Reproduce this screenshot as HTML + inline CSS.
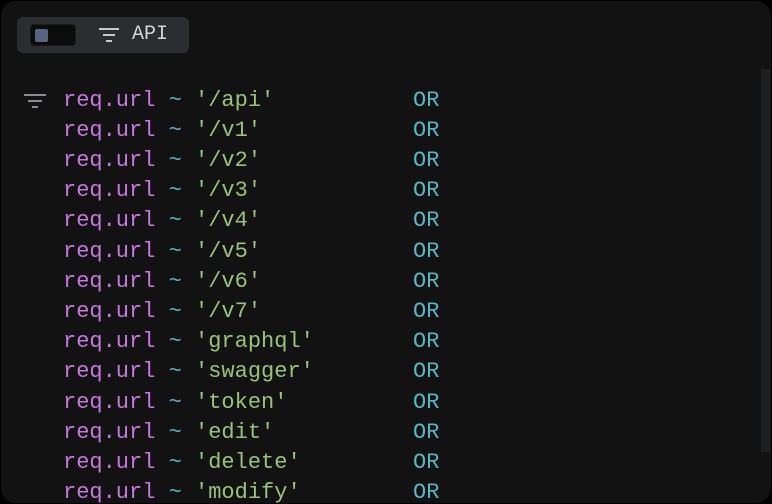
<!DOCTYPE html>
<html><head><style>
html,body{margin:0;padding:0;background:#000;}
.w{position:absolute;left:0;top:0;width:770px;height:502px;background:#121212;border:1px solid #000;border-radius:16px;overflow:hidden;}
.chip{position:absolute;left:16px;top:16px;width:172px;height:36px;background:#2c2d30;border-radius:6px;}
.tog{position:absolute;left:13px;top:7px;width:46px;height:22px;background:#0c0c0d;border-radius:4px;border:1px solid #1a1a1a;box-sizing:border-box;}
.tog i{position:absolute;left:4px;top:4px;width:13px;height:13px;background:#58637f;border-radius:2px;}
.api{position:absolute;left:115px;top:5px;font:20px "Liberation Mono",monospace;color:#d4d4d8;line-height:26px;}
.row{position:absolute;left:62px;font:22px/30px "Liberation Mono",monospace;color:#c678dd;white-space:pre;}
.t{color:#56b6c2}.s{color:#98c379}
.or{position:absolute;left:412px;font:22px/30px "Liberation Mono",monospace;color:#56b6c2;}
.sb{position:absolute;left:760px;top:68px;width:9px;height:383px;background:#1e1f21;}
</style></head><body><div class="w">
<div class="chip"><div class="tog"><i></i></div>
<svg style="position:absolute;left:82px;top:10px" width="20" height="16" viewBox="0 0 20 16"><g stroke="#c8c8cc" stroke-width="2"><line x1="0" y1="2" x2="20" y2="2"/><line x1="4" y1="8" x2="16" y2="8"/><line x1="7" y1="14" x2="13" y2="14"/></g></svg>
<div class="api">API</div></div>
<svg style="position:absolute;left:23px;top:93px" width="22" height="14" viewBox="0 0 22 14"><g stroke="#8a8a90" stroke-width="2"><line x1="0" y1="1" x2="22" y2="1"/><line x1="4" y1="7" x2="18" y2="7"/><line x1="8" y1="13" x2="14" y2="13"/></g></svg>
<div class="row" style="top:85px">req.url <span class="t">~</span> <span class="s">'/api'</span></div><div class="or" style="top:85px">OR</div>
<div class="row" style="top:115px">req.url <span class="t">~</span> <span class="s">'/v1'</span></div><div class="or" style="top:115px">OR</div>
<div class="row" style="top:145px">req.url <span class="t">~</span> <span class="s">'/v2'</span></div><div class="or" style="top:145px">OR</div>
<div class="row" style="top:175px">req.url <span class="t">~</span> <span class="s">'/v3'</span></div><div class="or" style="top:175px">OR</div>
<div class="row" style="top:205px">req.url <span class="t">~</span> <span class="s">'/v4'</span></div><div class="or" style="top:205px">OR</div>
<div class="row" style="top:236px">req.url <span class="t">~</span> <span class="s">'/v5'</span></div><div class="or" style="top:236px">OR</div>
<div class="row" style="top:266px">req.url <span class="t">~</span> <span class="s">'/v6'</span></div><div class="or" style="top:266px">OR</div>
<div class="row" style="top:296px">req.url <span class="t">~</span> <span class="s">'/v7'</span></div><div class="or" style="top:296px">OR</div>
<div class="row" style="top:326px">req.url <span class="t">~</span> <span class="s">'graphql'</span></div><div class="or" style="top:326px">OR</div>
<div class="row" style="top:356px">req.url <span class="t">~</span> <span class="s">'swagger'</span></div><div class="or" style="top:356px">OR</div>
<div class="row" style="top:387px">req.url <span class="t">~</span> <span class="s">'token'</span></div><div class="or" style="top:387px">OR</div>
<div class="row" style="top:417px">req.url <span class="t">~</span> <span class="s">'edit'</span></div><div class="or" style="top:417px">OR</div>
<div class="row" style="top:447px">req.url <span class="t">~</span> <span class="s">'delete'</span></div><div class="or" style="top:447px">OR</div>
<div class="row" style="top:477px">req.url <span class="t">~</span> <span class="s">'modify'</span></div><div class="or" style="top:477px">OR</div>
<div class="sb"></div>
</div></body></html>
